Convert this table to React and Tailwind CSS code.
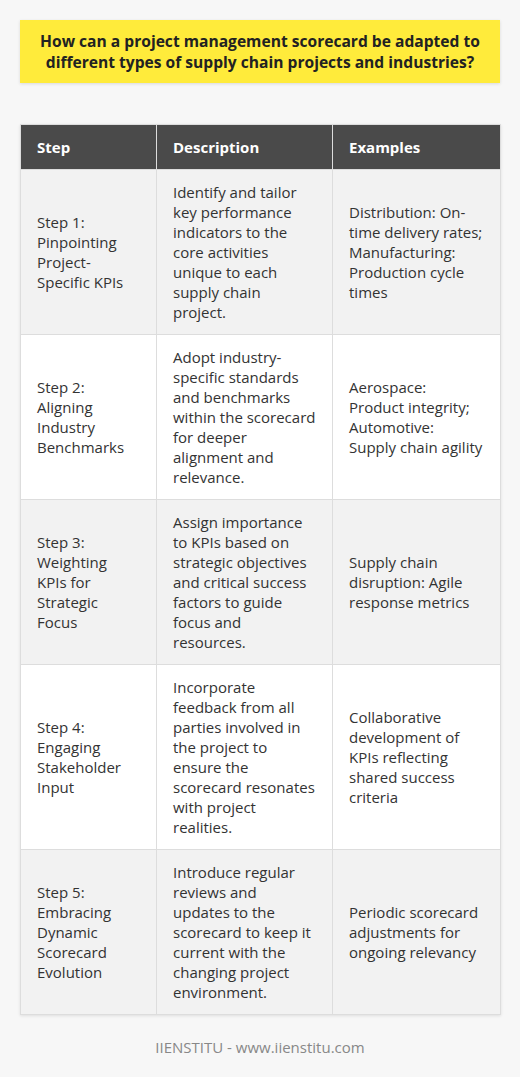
import React from "react";

const rows = [
  {
    step: "Step 1: Pinpointing Project-Specific KPIs",
    desc: "Identify and tailor key performance indicators to the core activities unique to each supply chain project.",
    ex: "Distribution: On-time delivery rates; Manufacturing: Production cycle times",
  },
  {
    step: "Step 2: Aligning Industry Benchmarks",
    desc: "Adopt industry-specific standards and benchmarks within the scorecard for deeper alignment and relevance.",
    ex: "Aerospace: Product integrity; Automotive: Supply chain agility",
  },
  {
    step: "Step 3: Weighting KPIs for Strategic Focus",
    desc: "Assign importance to KPIs based on strategic objectives and critical success factors to guide focus and resources.",
    ex: "Supply chain disruption: Agile response metrics",
  },
  {
    step: "Step 4: Engaging Stakeholder Input",
    desc: "Incorporate feedback from all parties involved in the project to ensure the scorecard resonates with project realities.",
    ex: "Collaborative development of KPIs reflecting shared success criteria",
  },
  {
    step: "Step 5: Embracing Dynamic Scorecard Evolution",
    desc: "Introduce regular reviews and updates to the scorecard to keep it current with the changing project environment.",
    ex: "Periodic scorecard adjustments for ongoing relevancy",
  },
];

export default function App() {
  return (
    <div
      className="min-h-[1077px] w-[520px] bg-[#f7f7f7] px-5 pt-5 text-[#333]"
      style={{ fontFamily: '"Open Sans", "Noto Sans", sans-serif' }}
    >
      <div className="bg-[#ffeb3b] px-[12px] pt-[11px] pb-[10px] text-center text-[15.6px] font-bold leading-[21px] text-[#222] shadow-[0_1px_3px_rgba(0,0,0,0.12)]">
        How can a project management scorecard be adapted to different types of supply chain projects and industries?
      </div>

      <table className="mt-[41px] w-[480px] table-fixed border-collapse text-[15px] leading-[20px] shadow-[0_1px_3px_rgba(0,0,0,0.1)]">
        <colgroup>
          <col className="w-[136px]" />
          <col className="w-[176px]" />
          <col className="w-[168px]" />
        </colgroup>
        <thead>
          <tr className="bg-[#4a4a4a] text-white">
            <th className="border border-[#dddddd] px-4 py-3 text-left font-bold">Step</th>
            <th className="border border-[#dddddd] px-4 py-3 text-left font-bold">Description</th>
            <th className="border border-[#dddddd] px-4 py-3 text-left font-bold">Examples</th>
          </tr>
        </thead>
        <tbody>
          {rows.map((r, i) => (
            <tr key={i} className={i % 2 === 0 ? "bg-[#f2f2f2]" : "bg-white"}>
              <td className="border border-[#dddddd] px-4 py-3 align-middle">{r.step}</td>
              <td className="border border-[#dddddd] px-4 py-3 align-middle">{r.desc}</td>
              <td className="border border-[#dddddd] px-4 py-3 align-middle">{r.ex}</td>
            </tr>
          ))}
        </tbody>
      </table>

      <div className="mt-[22px] text-center text-[15px] leading-[20px] text-[#888]">
        IIENSTITU - www.iienstitu.com
      </div>
    </div>
  );
}
